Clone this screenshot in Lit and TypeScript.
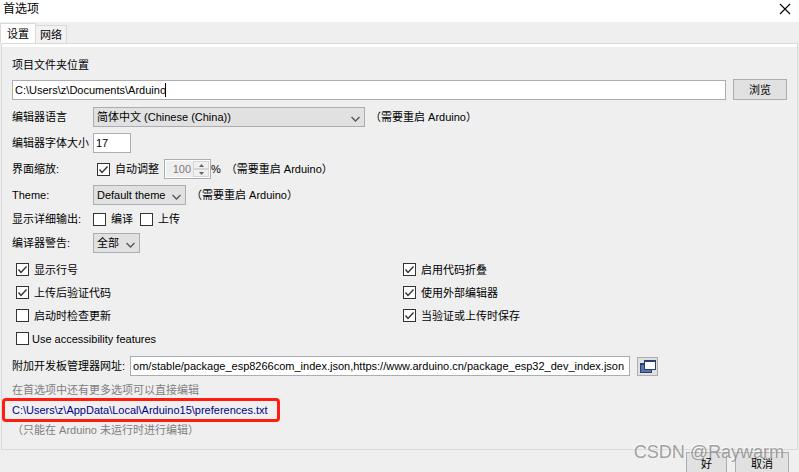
import { LitElement, html, css, svg } from "lit";
import { customElement, property } from "lit/decorators.js";

const check = svg`<path d="M2.5 6.5 5 9.5 10.5 3.5" fill="none" stroke="#333" stroke-width="1.4"/>`;

@customElement("check-option")
class CheckOption extends LitElement {
  @property() label = "";
  @property({ type: Boolean }) on = false;
  @property({ type: Boolean }) tight = false;

  static styles = css`
    :host { display: block; }
    label { display: flex; align-items: center; gap: 5px; height: 19px; white-space: nowrap; }
    .box { display: grid; width: 13px; height: 13px; flex: none; }
    .box > * { grid-area: 1 / 1; width: 13px; height: 13px; margin: 0; }
    input { appearance: none; box-sizing: border-box; border: 1px solid #333; background: #fff; }
    svg { pointer-events: none; visibility: hidden; z-index: 1; }
    input:checked + svg { visibility: visible; }
    .tight { gap: 3px; }
  `;

  render() {
    return html`<label class=${this.tight ? "tight" : ""}>
      <span class="box"><input type="checkbox" .checked=${this.on} /><svg viewBox="0 0 13 13">${check}</svg></span>
      <span>${this.label}</span>
    </label>`;
  }
}

@customElement("app-root")
class AppRoot extends LitElement {
  static styles = css`
    :host {
      display: flex; flex-direction: column; height: 100vh; overflow: hidden;
      background: #efefef; color: #000;
      font: 11px/16px "Liberation Sans", "Noto Sans CJK SC", sans-serif;
    }
    * { box-sizing: border-box; }
    .title { display: flex; justify-content: space-between; align-items: center; flex: none;
      height: 22px; background: #fff; padding: 0 8px 4px 3px; }
    h1 { margin: 0; font-size: 12px; font-weight: 400; }
    .close { border: 0; padding: 0; background: none; width: 12px; height: 12px; }
    .close svg, .icon svg { display: block; }
    .tabs { display: flex; align-items: flex-end; flex: none; height: 21px; }
    .tab { font: inherit; color: inherit; border: 1px solid #d9d9d9; border-bottom: 0; padding: 0;
      width: 31px; height: 18px; background: #f2f2f2; border-left: 0; }
    .tab.active { width: 36px; height: 20px; background: #fff; border-left: 1px solid #d9d9d9; }
    .panel { flex: none; margin: 0 1px; border: 1px solid #d9d9d9; padding: 0 10px; }
    .strip { height: 3px; margin: 0 -10px; background: #fff; }
    .body { display: flex; flex-direction: column; padding: 10px 0 11px; }
    .row { display: flex; align-items: center; white-space: nowrap; }
    .path { gap: 7px; margin: 6px 0 7px; }
    .field { position: relative; display: flex; flex: 1; }
    .caret { position: absolute; left: 153px; top: 3px; width: 1px; height: 14px; background: #000; }
    input.text { font: inherit; color: #000; height: 20px; width: 100%;
      border: 1px solid #abadb3; background: #fff; padding: 0 2px; border-radius: 0; }
    .btn { font: inherit; color: #000; background: #e1e1e1; border: 1px solid #adadad; padding: 0;
      height: 21px; border-radius: 0; flex: none; }
    .browse { width: 54px; }
    .settings { display: grid; grid-template-columns: 81px 1fr; align-items: center; row-gap: 6px; }
    .settings > * { height: 20px; }
    .settings > label, .settings > .name { line-height: 20px; white-space: nowrap; }
    .settings > .short { height: 16px; line-height: 16px; }
    .note { margin-left: 5px; }
    .select { display: grid; height: 20px; }
    .select > * { grid-area: 1 / 1; }
    select { appearance: none; font: inherit; color: #000; background: #e1e1e1; border: 1px solid #abadb3;
      border-radius: 0; padding: 0 3px; height: 20px; width: 100%; margin: 0; }
    .select svg { justify-self: end; align-self: center; margin: 3px 5px 0 0; width: 9px; height: 6px; pointer-events: none; z-index: 1; }
    .lang { width: 272px; }
    .theme { width: 93px; }
    .warn { width: 47px; }
    .size { max-width: 38px; }
    .scale { padding-left: 4px; gap: 5px; }
    .spin { display: flex; width: 47px; height: 20px; border: 1px solid #abadb3; background: #fff; padding: 1px; }
    .spin input { appearance: textfield; font: inherit; color: #7a7a7a; text-align: right; border: 0;
      background: #efefef; width: 27px; padding: 0 2px 0 0; min-width: 0; }
    .spin input::-webkit-inner-spin-button { appearance: none; }
    .arrows { display: grid; flex: 1; grid-template-rows: 1fr 1fr; }
    .arrows button { display: grid; place-items: center; border: 1px solid #d5d5d5; background: #f0f0f0; padding: 0; }
    .pct { margin-left: -5px; }
    .checks { gap: 7px; }
    .options { display: grid; grid-template-columns: 387px 1fr; row-gap: 4px; margin-top: 7px; padding-left: 4px; }
    .urls { margin-top: 8px; gap: 5px; }
    .urls .field { max-width: 500px; }
    .icon { width: 21px; height: 19px; margin-left: 2px; display: grid; place-items: center; }
    .hint { color: #808080; margin: 6px 0 4px; }
    .link { position: relative; align-self: flex-start; color: #00008b; text-decoration: none; }
    .mark { position: absolute; left: -10px; right: -12px; top: -4px; bottom: -4px; border: 3px solid #fe1d10; border-radius: 4px; }
    .only { margin: 4px 0 0; }
    .foot { position: relative; display: flex; justify-content: flex-end; gap: 8px; padding: 2px 10px 0 0; flex: none; }
    .ok { width: 41px; }
    .foot .btn { height: 23px; }
    .brand { position: absolute; right: 15px; top: -9px; font-size: 18px; line-height: 22px; color: #8a8a8acc;
      text-shadow: -1px -1px 0 #fff9; pointer-events: none; white-space: nowrap; }
  `;

  private chevron = html`<svg viewBox="0 0 9 6"><path d="M.5 1 4.5 5 8.5 1" fill="none" stroke="#555" stroke-width="1.3"/></svg>`;

  private restart = html`<span class="note">（需要重启 Arduino）</span>`;

  render() {
    return html`
      <header class="title">
        <h1>首选项</h1>
        <button class="close" aria-label="关闭"><svg width="12" height="12" viewBox="0 0 12 12"><path d="M1 1 11 11M11 1 1 11" stroke="#000" stroke-width="1.1"/></svg></button>
      </header>
      <nav class="tabs">
        <button class="tab active">设置</button><button class="tab">网络</button>
      </nav>
      <main class="panel">
        <div class="strip"></div>
        <div class="body">
          <label for="folder">项目文件夹位置</label>
          <div class="row path">
            <div class="field">
              <input class="text" id="folder" value="C:\\Users\\z\\Documents\\Arduino" />
              <span class="caret"></span>
            </div>
            <button class="btn browse">浏览</button>
          </div>
          <div class="settings">
            <label for="lang">编辑器语言</label>
            <div class="row">
              <div class="select lang"><select id="lang"><option>简体中文 (Chinese (China))</option></select>${this.chevron}</div>
              ${this.restart}
            </div>
            <label for="size">编辑器字体大小</label>
            <div class="row"><input class="text size" id="size" value="17" /></div>
            <span class="name">界面缩放:</span>
            <div class="row scale">
              <check-option label="自动调整" on></check-option>
              <div class="spin">
                <input type="number" value="100" disabled aria-label="界面缩放" />
                <span class="arrows">
                  <button disabled aria-label="+"><svg width="5" height="3"><path d="M0 3 2.5 0 5 3z" fill="#666"/></svg></button>
                  <button disabled aria-label="-"><svg width="5" height="3"><path d="M0 0 2.5 3 5 0z" fill="#666"/></svg></button>
                </span>
              </div>
              <span class="pct">%</span>
              <span>（需要重启 Arduino）</span>
            </div>
            <label for="theme">Theme:</label>
            <div class="row">
              <div class="select theme"><select id="theme"><option>Default theme</option></select>${this.chevron}</div>
              ${this.restart}
            </div>
            <span class="name short">显示详细输出:</span>
            <div class="row checks short"><check-option label="编译"></check-option><check-option label="上传"></check-option></div>
            <label for="warn">编译器警告:</label>
            <div class="row">
              <div class="select warn"><select id="warn"><option>全部</option></select>${this.chevron}</div>
            </div>
          </div>
          <div class="options">
            <check-option label="显示行号" on></check-option>
            <check-option label="启用代码折叠" on></check-option>
            <check-option label="上传后验证代码" on></check-option>
            <check-option label="使用外部编辑器" on></check-option>
            <check-option label="启动时检查更新"></check-option>
            <check-option label="当验证或上传时保存" on></check-option>
            <check-option label="Use accessibility features" tight></check-option>
          </div>
          <div class="row urls">
            <label for="urls">附加开发板管理器网址:</label>
            <div class="field"><input class="text" id="urls" value="om/stable/package_esp8266com_index.json,https://www.arduino.cn/package_esp32_dev_index.json" /></div>
            <button class="btn icon" aria-label="编辑网址"><svg width="17" height="15" viewBox="0 0 17 15">
              <rect x="1.5" y="4.5" width="11" height="9" fill="#5b76a6" stroke="#27416f"/><path d="M1 5.5H5" stroke="#27416f"/>
              <rect x="5.5" y="1.5" width="11" height="9" fill="#fff" stroke="#27416f"/><path d="M5 2.5H17" stroke="#27416f"/></svg></button>
          </div>
          <p class="hint">在首选项中还有更多选项可以直接编辑</p>
          <a class="link" href="#preferences">C:\\Users\\z\\AppData\\Local\\Arduino15\\preferences.txt<span class="mark"></span></a>
          <p class="hint only">（只能在 Arduino 未运行时进行编辑）</p>
        </div>
      </main>
      <footer class="foot">
        <button class="btn ok">好</button><button class="btn browse">取消</button>
        <span class="brand">CSDN @Raywarm</span>
      </footer>`;
  }
}
